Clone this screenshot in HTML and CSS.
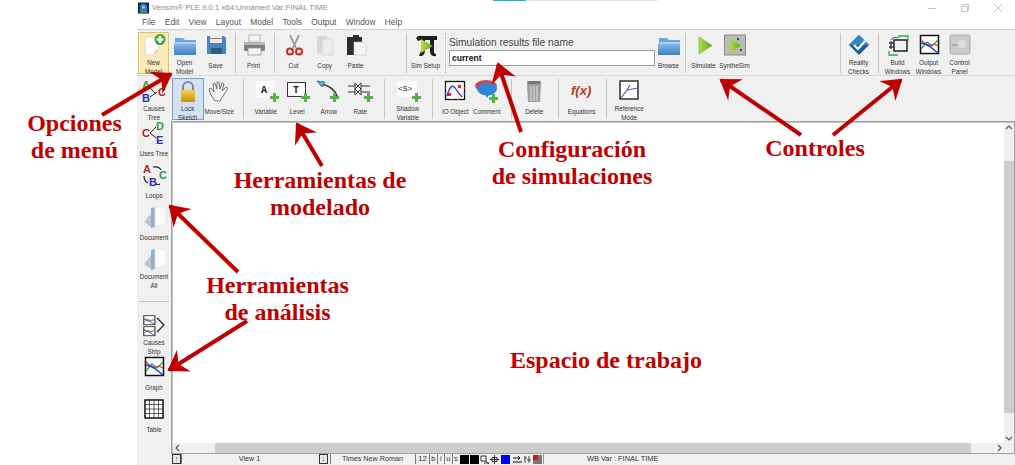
FILE: index.html
```html
<!DOCTYPE html>
<html lang="es">
<head>
<meta charset="utf-8">
<title>Vensim PLE</title>
<link rel="stylesheet" href="styles.css">
</head>
<body>
<svg class="defs" width="0" height="0" aria-hidden="true">
  <defs>
    <linearGradient id="gFolder" x1="0" y1="0" x2="0" y2="1"><stop offset="0" stop-color="#8fc0ee"/><stop offset="1" stop-color="#3f7fc4"/></linearGradient>
    <linearGradient id="gGreen" x1="0" y1="0" x2="1" y2="0"><stop offset="0" stop-color="#b5dc4a"/><stop offset="1" stop-color="#5fa81e"/></linearGradient>
    <linearGradient id="gLock" x1="0" y1="0" x2="0" y2="1"><stop offset="0" stop-color="#f6d04c"/><stop offset="1" stop-color="#c98f12"/></linearGradient>
    <marker id="head" markerUnits="userSpaceOnUse" markerWidth="26" markerHeight="26" refX="20" refY="13" orient="auto">
      <path d="M5 3 L20 13 L5 23 L10 13 Z" fill="#c00000" stroke="#c00000" stroke-width="2" stroke-linejoin="miter"/>
    </marker>
    <symbol id="plus" viewBox="0 0 26 23"><path d="M17 16h3v-3h3v3h3v3h-3v3h-3v-3h-3z" fill="#58b04c"/></symbol>
    <symbol id="folder" viewBox="0 0 26 23"><path d="M3 4h8l2 2h11v2H3z" fill="#6aa5e0"/><path d="M2 8h22v12a1 1 0 0 1-1 1H3a1 1 0 0 1-1-1z" fill="url(#gFolder)"/><path d="M2 9h22" stroke="#cfe4f8"/></symbol>
    <symbol id="graph" viewBox="0 0 26 23"><rect x="4.500" y="1.500" width="18" height="18" fill="#fff" stroke="#111" stroke-width="1.500"/><path d="M5 15 L11 8 L16 12 L22 6" fill="none" stroke="#27a33a" stroke-width="1.300"/><path d="M5 6 L12 12 L18 10 L22 12" fill="none" stroke="#e0433c" stroke-width="1.300"/><path d="M5 9 L12 11 L22 19" fill="none" stroke="#1c39dd" stroke-width="1.500"/></symbol>
    <symbol id="doc" viewBox="0 0 26 23"><path d="M3 16 L11 6 V22 Z" fill="#c4c4c4"/><path d="M10 2 L14 1 V21 L10 22 Z" fill="#8db0d4"/><path d="M14 1 H22 L25 4 V17 L14 21 Z" fill="#fbfbfb" stroke="#e2e2e2" stroke-width=".6"/></symbol>
  </defs>
</svg>

<div class="top-strip"><span class="strip-cyan"></span><span class="strip-gray"></span></div>

<div class="gutter"></div>
<div class="app">
  <header class="titlebar">
    <svg class="app-logo" viewBox="0 0 12 12"><rect width="12" height="12" fill="#12206e"/><path d="M2 12V5a4 4 0 0 1 8 0v7z" fill="#2c7bd6"/><path d="M1 12 L5 7 L11 12z" fill="#3f9b35"/><circle cx="6" cy="5" r="1.500" fill="#f2d33c"/></svg>
    <span class="title-text">Vensim® PLE 9.0.1 x64:Unnamed Var:FINAL TIME</span>
    <div class="winctl">
      <svg viewBox="0 0 10 10"><path d="M1 5.500h8" stroke="#c4c4c4"/></svg>
      <svg viewBox="0 0 10 10"><path d="M1.500 3.500h6v5h-6zM3 3V1.500h5.500V7H8" fill="none" stroke="#c4c4c4"/></svg>
      <svg viewBox="0 0 10 10"><path d="M1 1l8 8M9 1l-8 8" stroke="#c4c4c4"/></svg>
    </div>
  </header>
  <nav class="menubar">
    <span>File</span><span>Edit</span><span>View</span><span>Layout</span><span>Model</span><span>Tools</span><span>Output</span><span>Window</span><span>Help</span>
  </nav>

  <div class="toolbar toolbar-main">
    <div class="tool tool-hot"><svg viewBox="0 0 26 23"><path d="M4 3h14v12l-5 6H4z" fill="#fdfdfd" stroke="#d6d0bc" stroke-width=".8"/><path d="M13 21l1-5 4-1z" fill="#d9d3c2"/><circle cx="19" cy="5.500" r="5.500" fill="#3aa63a"/><path d="M17.700 2h2.600v2.200h2.200v2.600h-2.200V9h-2.600V6.800h-2.200V4.200h2.200z" fill="#fff"/></svg><span>New<br>Model</span></div>
    <div class="tool"><svg viewBox="0 0 26 23"><use href="#folder"/></svg><span>Open<br>Model</span></div>
    <div class="tool"><svg viewBox="0 0 26 23"><path d="M4 2h17l2 2v16H4z" fill="#4a84bf"/><rect x="7" y="2" width="12" height="7" fill="#e8edf2"/><rect x="7" y="4" width="12" height="1" fill="#d66a5c"/><rect x="8" y="14" width="11" height="6" fill="#34597f"/></svg><span>Save</span></div>
    <i class="sep"></i>
    <div class="tool"><svg viewBox="0 0 26 23"><rect x="8" y="1" width="11" height="7" fill="#f4f4f4" stroke="#9a9a9a" stroke-width=".7"/><rect x="3" y="8" width="21" height="9" rx="1.500" fill="#7d7d7d"/><rect x="3" y="8" width="21" height="3" fill="#b5b5b5"/><rect x="7" y="14" width="13" height="7" fill="#f4f4f4" stroke="#8a8a8a" stroke-width=".7"/></svg><span>Print</span></div>
    <i class="sep sep-wide"></i>
    <div class="tool"><svg viewBox="0 0 26 23"><path d="M9 1l6 13M18 1l-6 13" stroke="#9c9c9c" stroke-width="1.800"/><circle cx="9" cy="17.500" r="3" fill="none" stroke="#c92b25" stroke-width="2"/><circle cx="18" cy="17.500" r="3" fill="none" stroke="#c92b25" stroke-width="2"/></svg><span>Cut</span></div>
    <div class="tool"><svg viewBox="0 0 26 23"><path d="M5 2h10v17H5z" fill="#d6d6d6"/><path d="M10 5h8l3 3v13H10z" fill="#ececec" stroke="#cfcfcf" stroke-width=".6"/></svg><span>Copy</span></div>
    <div class="tool"><svg viewBox="0 0 26 23"><path d="M4 3h6V1h6v2h3v6H11v12H4z" fill="#2c2c2c"/><path d="M11 8h9l3 3v10H11z" fill="#f6f6f6" stroke="#c4c4c4" stroke-width=".6"/></svg><span>Paste</span></div>
    <div class="spacer-a"></div>
    <i class="sep sep-r3"></i>
    <div class="tool"><svg viewBox="0 0 26 23"><path d="M5 7L3 4q2-3 6-2h15v4h-3v12q0 2 2 2v2q-6 1-6-5V6h-5v11q0 3-3 5H6q3-5 2-16z" fill="#1e1e1e"/><path d="M8 5l12 7-12 7z" fill="url(#gGreen)"/></svg><span>Sim Setup</span></div>
    <i class="sep sep-dotted"></i>
    <div class="simfile">
      <label class="simfile-label" for="simname">Simulation results file name</label>
      <input class="simfile-input" id="simname" value="current">
    </div>
    <div class="tool tool-tight"><svg viewBox="0 0 26 23"><use href="#folder"/></svg><span>Browse</span></div>
    <i class="sep sep-close"></i>
    <div class="tool"><svg viewBox="0 0 26 23"><path d="M8 3l13 8.500L8 20z" fill="url(#gGreen)" stroke="#6da82c" stroke-width=".6"/></svg><span>Simulate</span></div>
    <div class="tool"><svg viewBox="0 0 26 23"><rect x="2.500" y="1" width="21" height="20" fill="#b9bcb4" stroke="#8a8a8a"/><path d="M8 4l11 7.500L8 19z" fill="url(#gGreen)"/><rect x="15" y="4" width="2" height="2" fill="#444"/><rect x="18" y="15" width="2" height="2" fill="#444"/></svg><span>SyntheSim</span></div>
    <div class="spacer-b"></div>
    <i class="sep"></i>
    <div class="tool"><svg viewBox="0 0 26 23"><path d="M13 1l10 10-10 10L3 11z" fill="#1c5f96"/><path d="M13 1l10 10H3z" fill="#2f86c0"/><path d="M8 11l4 4 7-8" fill="none" stroke="#fff" stroke-width="2.200"/></svg><span>Reality<br>Checks</span></div>
    <i class="sep sep-r3"></i>
    <div class="tool"><svg viewBox="0 0 26 23"><rect x="9" y="6" width="13" height="11" fill="#f0f0f0" stroke="#222" stroke-width="1.500"/><path d="M4 9h5M4 13h5M6 7v8" stroke="#333" stroke-width="1.300"/><path d="M14 4V2h9v5M4 17v4h9" fill="none" stroke="#2fa84a" stroke-width="1.300"/><path d="M6 6q3-4 7-2" fill="none" stroke="#3a6fd0" stroke-width="1.200"/></svg><span>Build<br>Windows</span></div>
    <div class="tool"><svg viewBox="0 0 26 23"><use href="#graph"/></svg><span>Output<br>Windows</span></div>
    <div class="tool"><svg viewBox="0 0 26 23"><rect x="3" y="1" width="20" height="19" rx="2" fill="#cacaca" stroke="#a8a8a8"/><circle cx="15" cy="10" r="4" fill="#dedede"/><path d="M5 11h6" stroke="#8c8c8c"/></svg><span>Control<br>Panel</span></div>
  </div>

  <div class="work">
    <aside class="sidebar">
      <div class="tool side-tool"><svg viewBox="0 0 26 23"><text x="1" y="9" class="ltr" fill="#2e9e3e">A</text><text x="1" y="22" class="ltr" fill="#2a2fb5">B</text><text x="17" y="16" class="ltr" fill="#a52a2a">C</text><path d="M9 17l7-5M9 8l5 5" stroke="#222" fill="none"/></svg><span>Causes<br>Tree</span></div>
      <div class="tool side-tool"><svg viewBox="0 0 26 23"><text x="1" y="15" class="ltr" fill="#a52a2a">C</text><text x="15" y="8" class="ltr" fill="#2e9e3e">D</text><text x="15" y="22" class="ltr" fill="#2a2fb5">E</text><path d="M15 5l-6 6 6 5" stroke="#222" fill="none"/></svg><span>Uses Tree</span></div>
      <div class="tool side-tool"><svg viewBox="0 0 26 23"><text x="2" y="9" class="ltr" fill="#a52a2a">A</text><text x="18" y="15" class="ltr" fill="#2e9e3e">C</text><text x="8" y="22" class="ltr" fill="#2a2fb5">B</text><path d="M12 3q6-1 8 3M19 20q-2 1-4 0M3 12q0 5 4 7" fill="none" stroke="#222" stroke-width="1.200"/></svg><span>Loops</span></div>
      <div class="tool side-tool"><svg viewBox="0 0 26 23"><use href="#doc"/></svg><span>Document</span></div>
      <div class="tool side-tool"><svg viewBox="0 0 26 23"><use href="#doc"/></svg><span>Document<br>All</span></div>
      <hr class="side-sep">
      <div class="tool side-tool"><svg viewBox="0 0 26 23"><g transform="scale(.62 .5)"><use href="#graph" width="26" height="23" x="0" y="2"/></g><g transform="translate(0 11) scale(.62 .5)"><use href="#graph" width="26" height="23" x="0" y="2"/></g><path d="M16 4l7 7-7 7" fill="none" stroke="#222" stroke-width="1.200"/></svg><span>Causes<br>Strip</span></div>
      <div class="tool side-tool"><svg viewBox="0 0 26 23"><use href="#graph"/></svg><span>Graph</span></div>
      <div class="tool side-tool"><svg viewBox="0 0 26 23"><rect x="4" y="2" width="18" height="18" fill="#fff" stroke="#111" stroke-width="1.500"/><path d="M4 6.500h18M4 11h18M4 15.500h18M8.500 2v18M13 2v18M17.500 2v18" stroke="#333" stroke-width=".8"/></svg><span>Table</span></div>
    </aside>

    <div class="work-main">
      <div class="toolbar toolbar-sketch">
        <div class="tool tool-active"><svg viewBox="0 0 26 23"><path d="M8 11V7a5 5 0 0 1 10 0v4" fill="none" stroke="#8a8a8a" stroke-width="2"/><rect x="6" y="10" width="14" height="12" fill="url(#gLock)"/></svg><span>Lock<br>Sketch</span></div>
        <div class="tool"><svg viewBox="0 0 26 23"><path d="M5 15L3 9l2-1 3 4-1-8 2-1 2 6 0-7h2l1 7 2-6 2 1-2 7 4-4 2 1-5 8-3 5H9z" fill="#f4f4f4" stroke="#666" stroke-width=".9"/></svg><span>Move/Size</span></div>
        <i class="sep sep-first"></i>
        <div class="tool"><svg viewBox="0 0 26 23"><rect x="3" y="1" width="18" height="17" fill="#fbfbfb"/><text x="8" y="13" class="ltr-sm">A</text><use href="#plus"/></svg><span>Variable</span></div>
        <div class="tool"><svg viewBox="0 0 26 23"><rect x="3.500" y="2.500" width="18" height="14" fill="#fbfbfb" stroke="#333"/><text x="9" y="13" class="ltr-sm">T</text><use href="#plus"/></svg><span>Level</span></div>
        <div class="tool"><svg viewBox="0 0 26 23"><path d="M5 4q13 2 17 14" fill="none" stroke="#333" stroke-width="1.500"/><path d="M1 1l8 1-3 5z" fill="#3cc0d0" stroke="#333" stroke-width=".6"/><use href="#plus" transform="translate(-3 0)"/></svg><span>Arrow</span></div>
        <div class="tool"><svg viewBox="0 0 26 23"><path d="M1 6h22M1 12h22" stroke="#333"/><path d="M8 3l6 6-6 6zM14 3l-6 6 6 6z" fill="#fff" stroke="#333"/><use href="#plus"/></svg><span>Rate</span></div>
        <i class="sep"></i>
        <div class="tool"><svg viewBox="0 0 26 23"><rect x="2" y="1" width="20" height="16" fill="#fbfbfb"/><text x="3" y="11" class="ltr-xs">&lt;S&gt;</text><use href="#plus"/></svg><span>Shadow<br>Variable</span></div>
        <i class="sep"></i>
        <div class="tool"><svg viewBox="0 0 26 23"><rect x="3.500" y="1.500" width="19" height="18" fill="#fff" stroke="#111" stroke-width="1.300"/><path d="M3 8h20M3 14h20M10 2v18M16 2v18" stroke="#ccc" stroke-width=".6"/><path d="M5 16q4-14 8-8t7 9" fill="none" stroke="#2438c8" stroke-width="1.300"/><rect x="6" y="13" width="3" height="3" fill="#e0202a"/><rect x="16" y="5" width="3" height="3" fill="#e0202a"/></svg><span>IO Object</span></div>
        <div class="tool"><svg viewBox="0 0 26 23"><ellipse cx="12" cy="6" rx="11" ry="6" fill="#d9443a"/><ellipse cx="13" cy="9" rx="10" ry="6.500" fill="#2d86d8"/><path d="M11 14l2 4 3-4z" fill="#2d86d8"/><use href="#plus" transform="translate(-2 1)"/></svg><span>Comment</span></div>
        <i class="sep"></i>
        <div class="tool"><svg viewBox="0 0 26 23"><rect x="6" y="1" width="14" height="3" rx="1.500" fill="#777"/><path d="M6 4h14l-1 18H7z" fill="#9f9f9f"/><path d="M10 6v15M13 6v15M16 6v15" stroke="#e4e4e4"/></svg><span>Delete</span></div>
        <i class="sep"></i>
        <div class="tool"><svg viewBox="0 0 26 23"><text x="2" y="15" class="fx">f(x)</text></svg><span>Equations</span></div>
        <i class="sep"></i>
        <div class="tool"><svg viewBox="0 0 26 23"><rect x="4" y="1" width="18" height="18" fill="#fff" stroke="#222" stroke-width="1.400"/><path d="M5 18L11 10l3-5M11 10l11-2" fill="none" stroke="#5a4ec0" stroke-width="1.200"/></svg><span>Reference<br>Mode</span></div>
      </div>

      <div class="canvas-frame">
        <div class="canvas-row">
          <div class="canvas"></div>
          <div class="vscroll">
            <svg class="sb-btn" viewBox="0 0 10 10"><path d="M2 6l3-3 3 3" fill="none" stroke="#555" stroke-width="1.200"/></svg>
            <div class="vthumb"></div>
            <svg class="sb-btn" viewBox="0 0 10 10"><path d="M2 4l3 3 3-3" fill="none" stroke="#555" stroke-width="1.200"/></svg>
          </div>
        </div>
        <div class="hscroll">
          <svg class="sb-btn" viewBox="0 0 10 10"><path d="M6 2L3 5l3 3" fill="none" stroke="#555" stroke-width="1.200"/></svg>
          <div class="hthumb"></div>
          <svg class="sb-btn sb-end" viewBox="0 0 10 10"><path d="M4 2l3 3-3 3" fill="none" stroke="#555" stroke-width="1.200"/></svg>
        </div>
      </div>

      <footer class="statusbar">
        <b class="st-ico">↑</b><span class="st-view">View 1</span><b class="st-ico st-ico2">↓</b>
        <span class="st-font">Times New Roman</span>
        <span class="st-size">12</span><span class="st-k">b</span><span class="st-k">i</span><span class="st-k">u</span><span class="st-k">s</span>
        <i class="st-col st-black"></i><i class="st-col st-black"></i>
        <svg class="st-svg" viewBox="0 0 9 9"><path d="M1 1h5v5H1zM6 6l3 3M4 8h5" fill="none" stroke="#333"/></svg>
        <svg class="st-svg" viewBox="0 0 9 9"><path d="M0 4.500h9M4.500 0v9M2 2.500h5v4H2z" fill="none" stroke="#333"/></svg>
        <i class="st-col st-blue"></i>
        <svg class="st-svg" viewBox="0 0 9 9"><path d="M0 3h7M5 1l2 2-2 2M0 7h9" fill="none" stroke="#111"/></svg>
        <svg class="st-svg" viewBox="0 0 9 9"><path d="M2 1v7M1 3h3M6 1v7M4 5h4" fill="none" stroke="#444"/></svg>
        <svg class="st-svg" viewBox="0 0 9 9"><rect width="9" height="9" fill="#777"/><rect width="5" height="5" fill="#d01818"/></svg>
        <span class="st-var">WB Var : FINAL TIME</span>
      </footer>
    </div>
  </div>
</div>

<svg class="arrows" viewBox="0 0 1015 465" aria-hidden="true">
  <g fill="none" stroke="#c00000" stroke-width="4">
    <path d="M102 115 L171 74" marker-end="url(#head)"/>
    <path d="M322 166 L297 124" marker-end="url(#head)"/>
    <path d="M521 132 L498 64" marker-end="url(#head)"/>
    <path d="M801 135 L721 80" marker-end="url(#head)"/>
    <path d="M833 135 L901 80" marker-end="url(#head)"/>
    <path d="M238 272 L170 206" marker-end="url(#head)"/>
    <path d="M247 321 L169 370" marker-end="url(#head)"/>
  </g>
</svg>

<div class="note note-menu">Opciones<br>de menú</div>
<div class="note note-model">Herramientas de<br>modelado</div>
<div class="note note-sim">Configuración<br>de simulaciones</div>
<div class="note note-ctrl">Controles</div>
<div class="note note-anal">Herramientas<br>de análisis</div>
<div class="note note-work">Espacio de trabajo</div>
</body>
</html>
```

FILE: styles.css
```css
* { box-sizing: border-box; }
html, body { margin: 0; padding: 0; }
body {
  width: 1015px;
  height: 465px;
  overflow: hidden;
  display: flex;
  position: relative;
  background: #fff;
  font-family: "Liberation Sans", Arial, sans-serif;
  color: #333;
}
.defs { position: absolute; }
.gutter { width: 137px; flex: none; }
.app { flex: 1; display: flex; flex-direction: column; min-width: 0; height: 465px; background: #f0f0f0; }

.top-strip { position: absolute; left: 493px; top: 0; display: flex; height: 1px; }
.strip-cyan { width: 33px; background: #12bcc4; }
.strip-gray { width: 132px; background: #e4e4e4; }

.titlebar { height: 15px; background: #fff; display: flex; align-items: center; padding-left: 1px; }
.app-logo { width: 11px; height: 12px; margin-right: 3px; }
.title-text { font-size: 7.750px; color: #8a8a8a; }
.winctl { margin-left: auto; display: flex; gap: 23px; padding-right: 12px; }
.winctl svg { width: 10px; height: 10px; }

.menubar { height: 14px; background: #fff; display: flex; align-items: center; padding-left: 5px; font-size: 8.400px; color: #555; }
.menubar span { margin-right: 9.300px; }

.toolbar { display: flex; align-items: flex-start; background: #f0f0f0; }
.toolbar-main { height: 47px; border-top: 1px solid #cfcfcf; border-bottom: 1px solid #d8d8d8; padding: 2px 0 0 1px; margin-bottom: 1px; }
.toolbar-sketch { height: 44px; padding: 1px 0 0 1px; }

.tool { width: 31px; height: 42px; flex: none; padding-top: 2px; display: flex; flex-direction: column; align-items: center; font-size: 6.300px; line-height: 8.500px; color: #333; text-align: center; }
.tool svg { width: 26px; height: 23px; flex: none; overflow: visible; }
.tool span { height: 18px; margin-top: 2px; display: flex; align-items: center; white-space: nowrap; }
.tool-hot { background: #fbe9b9; box-shadow: inset 0 0 0 1px #e2c368; }
.tool-active { background: #d3e2f2; box-shadow: inset 0 0 0 1px #7c9fc8; }
.tool-tight { margin-left: -2px; }

.sep { width: 1px; height: 40px; flex: none; background: #c4c4c4; margin: 1px 2px 0 4px; }
.sep-wide { margin: 1px 3px 0 5px; }
.sep-r3 { margin: 1px 3px 0 4px; }
.sep-dotted { background: none; border-left: 1px dotted #aaa; margin: 1px 3px 0 4px; }
.sep-close { margin: 1px 2px 0 1px; }
.spacer-a { width: 31px; flex: none; }
.spacer-b { width: 86px; flex: none; }

.toolbar-sketch .tool { width: 31.500px; }
.toolbar-sketch .sep { margin: 1px 7px 0 8px; }
.toolbar-sketch .sep-first { margin: 1px 6px 0 8px; }

.simfile { width: 206px; flex: none; display: flex; flex-direction: column; padding-top: 4px; }
.simfile-label { font-size: 10.200px; line-height: 14px; color: #444; }
.simfile-input { width: 206px; height: 16px; margin: 0; padding: 0 2px; border: 1px solid #9a9a9a; background: #fff; font: bold 8.600px "Liberation Sans", Arial, sans-serif; color: #111; outline: none; }

.work { flex: 1; display: flex; min-height: 0; }
.sidebar { width: 34px; flex: none; display: flex; flex-direction: column; padding-top: 1px; }
.side-tool { height: 42px; width: 34px; }
.side-sep { width: 30px; margin: 13px 0 10px 2px; border: 0; border-top: 1px solid #c4c4c4; height: 0; }

.ltr { font: 700 11px "Liberation Sans", Arial, sans-serif; }
.ltr-sm { font: 700 10px "Liberation Mono", monospace; fill: #222; }
.ltr-xs { font: 8px "Liberation Mono", monospace; fill: #222; }
.fx { font: italic 700 13px "Liberation Sans", Arial, sans-serif; fill: #c0391a; }

.work-main { flex: 1; min-width: 0; display: flex; flex-direction: column; }
.canvas-frame { height: 333px; flex: none; display: flex; flex-direction: column; border: 1px solid #a2a2a2; box-shadow: inset 1px 1px 0 #c4c4c4; background: #fff; padding: 1px 0 0 1px; }
.canvas-row { flex: 1; display: flex; min-height: 0; }
.canvas { flex: 1; background: #fff; }
.vscroll { width: 10px; flex: none; background: #f0f0f0; display: flex; flex-direction: column; justify-content: space-between; }
.vthumb { width: 10px; height: 252px; background: #cdcdcd; margin-top: 28px; margin-bottom: 20px; }
.sb-btn { width: 10px; height: 10px; flex: none; }
.hscroll { height: 10px; flex: none; background: #f0f0f0; display: flex; align-items: stretch; }
.hthumb { width: 756px; background: #cdcdcd; margin-left: 32px; }
.sb-end { margin-left: auto; margin-right: 10px; }

.statusbar { height: 10px; flex: none; display: flex; align-items: center; font-size: 7.200px; color: #333; background: #f0f0f0; padding-left: 1px; white-space: nowrap; }
.statusbar span { display: block; height: 10px; line-height: 10px; text-align: center; border-left: 1px solid #777; }
.st-ico { width: 9px; height: 10px; border: 1px solid #333; font-size: 7px; line-height: 8px; text-align: center; background: #e8e8e8; flex: none; }
.st-ico2 { margin-left: 2px; }
.st-view { width: 136px; }
.st-font { width: 84px; margin-left: 2px; }
.statusbar .st-size { width: 14px; margin-left: 1px; font-size: 8px; }
.statusbar .st-k { width: 7.500px; }
.st-col { width: 9px; height: 9px; flex: none; margin-left: 1px; }
.st-black { background: #000; }
.st-blue { background: #0000ff; margin-left: 2px; margin-right: 2px; }
.st-svg { width: 9px; height: 9px; flex: none; margin-left: 1px; }
.statusbar .st-var { border-left: 1px solid #999; margin-left: 1px; flex: 1; padding-left: 43px; text-align: left; font-size: 7.400px; }

.arrows { position: absolute; left: 0; top: 0; width: 1015px; height: 465px; pointer-events: none; }

.note { position: absolute; font: 700 24px/27px "Liberation Serif", serif; color: #c00000; text-align: center; white-space: nowrap; }
.note-menu { left: 22px; top: 110px; width: 105px; }
.note-model { left: 230px; top: 167px; width: 180px; }
.note-sim { left: 482px; top: 136px; width: 180px; }
.note-ctrl { left: 755px; top: 135px; width: 120px; }
.note-anal { left: 200px; top: 272px; width: 155px; }
.note-work { left: 510px; top: 347px; }
```
